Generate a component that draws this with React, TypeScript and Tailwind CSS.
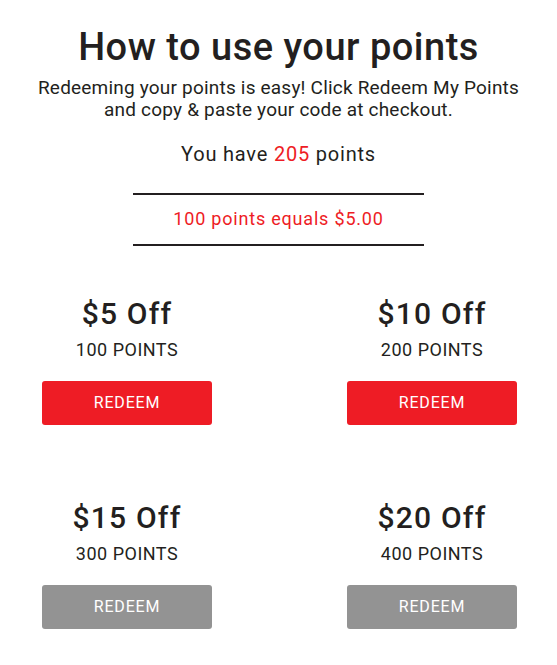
import React from "react";

const offers = [
  { off: "$5 Off", pts: "100 POINTS", active: true },
  { off: "$10 Off", pts: "200 POINTS", active: true },
  { off: "$15 Off", pts: "300 POINTS", active: false },
  { off: "$20 Off", pts: "400 POINTS", active: false },
];

export default function App() {
  return (
    <div
      className="w-[557px] min-h-[665px] bg-white text-[#231f20] flex flex-col items-center pt-[25px]"
      style={{ fontFamily: "Roboto, 'Noto Sans', sans-serif" }}
    >
      <h1 className="text-[38px] leading-[44px] font-medium tracking-[0.5px]">How to use your points</h1>
      <p className="mt-[8px] text-[19px] leading-[22px] text-center tracking-[0.2px]">
        Redeeming your points is easy! Click Redeem My Points
        <br />
        and copy &amp; paste your code at checkout.
      </p>
      <p className="mt-[22px] text-[20px] leading-[22px] tracking-[0.8px]">
        You have <span className="text-[#ee1c25]">205</span> points
      </p>
      <div className="mt-[28px] w-[291px] border-t-2 border-b-2 border-[#231f20] pt-[13px] pb-[14px] text-center text-[18px] leading-[22px] tracking-[0.8px] text-[#ee1c25]">
        100 points equals $5.00
      </div>
      <div className="mt-[50px] w-full pl-[42px] pr-[40px] grid grid-cols-[170px_170px] justify-between gap-y-[75px]">
        {offers.map((o) => (
          <div key={o.off} className="flex flex-col items-center">
            <div className="text-[30px] leading-[36px] font-medium tracking-[1.2px]">{o.off}</div>
            <div className="mt-[7px] text-[18px] leading-[22px] tracking-[0.5px]">{o.pts}</div>
            <button
              className={`mt-[20px] w-full h-[44px] rounded-[3px] text-white text-[16px] tracking-[0.8px] ${
                o.active ? "bg-[#ee1c25]" : "bg-[#939393]"
              }`}
            >
              REDEEM
            </button>
          </div>
        ))}
      </div>
    </div>
  );
}
